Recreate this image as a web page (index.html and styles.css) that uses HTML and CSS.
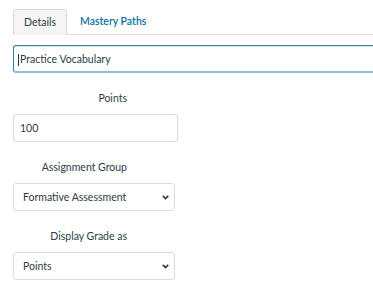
FILE: index.html
```html
<!DOCTYPE html>
<html>
<head>
    <title>Edit Assignment</title>
    <link rel="stylesheet" href="styles.css">
</head>
<body>
    <ul class="tabs">
        <li class="tab active">Details</li>
        <li class="tab">Mastery Paths</li>
    </ul>

    <div class="title-wrap">
        <input type="text" class="title-input" value="Practice Vocabulary">
        <span class="caret"></span>
    </div>

    <div class="field">
        <label class="field-label">Points</label>
        <input type="text" class="points-input" value="100">
    </div>

    <div class="field">
        <label class="field-label">Assignment Group</label>
        <div class="select">
            <span>Formative Assessment</span>
            <svg class="chevron" width="7" height="5" viewBox="0 0 7 5"><path d="M0.8 0.9 L3.5 3.6 L6.2 0.9" fill="none" stroke="#2d3b45" stroke-width="1.7"/></svg>
        </div>
    </div>

    <div class="field">
        <label class="field-label">Display Grade as</label>
        <div class="select">
            <span>Points</span>
            <svg class="chevron" width="7" height="5" viewBox="0 0 7 5"><path d="M0.8 0.9 L3.5 3.6 L6.2 0.9" fill="none" stroke="#2d3b45" stroke-width="1.7"/></svg>
        </div>
    </div>
</body>
</html>
```

FILE: styles.css
```css
body {
    margin: 0;
    padding: 9px 0 0 13px;
    font-family: Lato, "Open Sans", sans-serif;
    font-size: 10.5px;
    color: #2d3b45;
    background-color: #fff;
    overflow: hidden;
}
.tabs {
    display: flex;
    list-style: none;
    margin: 0;
    padding: 0;
    border-bottom: 1px solid #d7dcde;
    height: 25px;
}
.tab {
    height: 25px;
    line-height: 25px;
    padding: 0 14px 0 13px;
    color: #0770a3;
    font-weight: 600;
}
.tab.active {
    padding: 0 10px 0 10px;
    background-color: #f5f5f5;
    border: 1px solid #d7dcde;
    border-bottom: none;
    border-radius: 3px 3px 0 0;
    color: #2d3b45;
    font-weight: normal;
    height: 25px;
    margin-bottom: -1px;
}
.title-wrap {
    position: relative;
    margin-top: 10px;
}
.title-input {
    display: block;
    box-sizing: border-box;
    width: 400px;
    height: 28px;
    margin: 0;
    padding: 0 5px 0 6px;
    font-family: inherit;
    font-size: 10.5px;
    color: #2d3b45;
    border: 1px solid #2d83b0;
    border-bottom: 2px solid #8ec0d4;
    border-radius: 3px;
    box-shadow: inset 0 1px 0 #e3e7e8;
    outline: none;
}
.caret {
    position: absolute;
    left: 5px;
    top: 9px;
    width: 1px;
    height: 12px;
    background-color: #2d3b45;
}
.field {
    width: 165px;
}
.field-label {
    display: block;
    width: 114px;
    text-align: right;
    margin-top: 19px;
    margin-bottom: 9px;
    line-height: 13px;
}
.points-input {
    display: block;
    box-sizing: border-box;
    width: 165px;
    height: 28px;
    padding: 0 6px;
    font-family: inherit;
    font-size: 10.5px;
    color: #2d3b45;
    border: 1px solid #d7dcde;
    border-radius: 3px;
}
.select {
    box-sizing: border-box;
    width: 162px;
    height: 28px;
    display: flex;
    align-items: center;
    justify-content: space-between;
    padding: 0 5px 0 9px;
    border: 1px solid #d7dcde;
    border-radius: 3px;
}
.chevron {
    display: block;
}
```
